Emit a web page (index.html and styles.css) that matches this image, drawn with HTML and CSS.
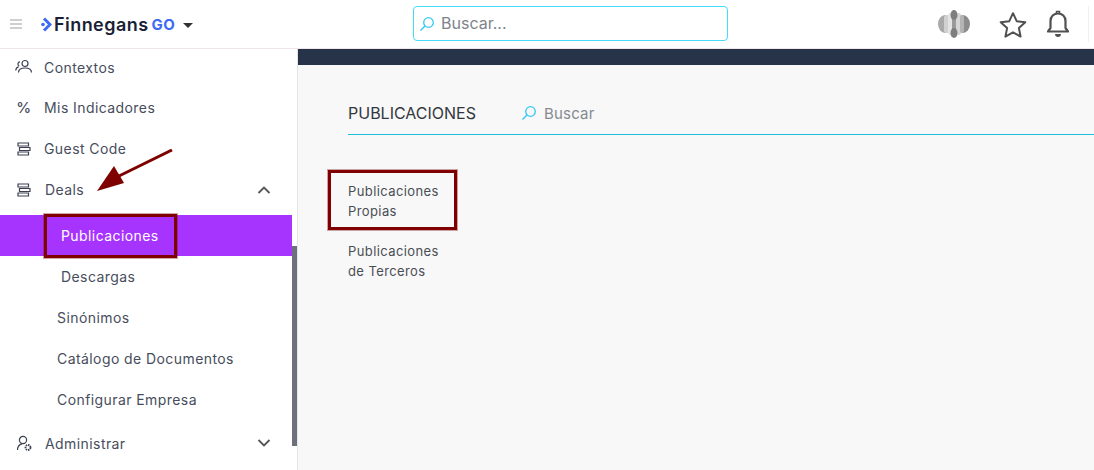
FILE: index.html
```html
<!DOCTYPE html>
<html lang="es">
<head>
  <meta charset="UTF-8" />
  <meta name="viewport" content="width=device-width, initial-scale=1.0"/>
  <title>Publicaciones</title>
  <link rel="stylesheet" href="styles.css">
</head>
<body>

<header class="topbar">
  <div class="marca">
    <svg class="hamburguesa" width="14" height="10" viewBox="0 0 14 10"><path d="M1 1h12M1 5h12M1 9h12" stroke="#a0a0a0" stroke-width="1.200" fill="none"/></svg>
    <svg class="logo-icono" width="11" height="15" viewBox="0 0 11 15"><path d="M3 1.500 9 7.500l-6 6" stroke="#3d6bf5" stroke-width="3" fill="none"/><circle cx="2" cy="7.500" r="1.800" fill="#3d6bf5"/></svg>
    <span class="logo-texto">Finnegans</span><span class="logo-go">GO</span>
    <span class="caret"></span>
  </div>
  <div class="buscador">
    <svg width="16" height="16" viewBox="0 0 16 16"><circle cx="9.500" cy="6.500" r="4.800" stroke="#35c9f2" stroke-width="1.300" fill="none"/><path d="M6 10 1.500 14.500" stroke="#35c9f2" stroke-width="1.500"/></svg>
    <span>Buscar...</span>
  </div>
  <div class="acciones">
    <svg class="nube" width="32" height="30" viewBox="0 0 32 30">
      <ellipse cx="7" cy="15" rx="7" ry="9" fill="#a9a9a9"/>
      <ellipse cx="25" cy="15" rx="7" ry="9" fill="#8c8c8c"/>
      <rect x="6" y="6" width="5" height="18" rx="2.500" fill="#d0d0d0"/>
      <rect x="10" y="4" width="5" height="22" rx="2.500" fill="#e4e4e4"/>
      <rect x="18" y="4" width="5" height="22" rx="2.500" fill="#d6d6d6"/>
      <rect x="22" y="6" width="4" height="18" rx="2" fill="#b4b4b4"/>
      <rect x="14" y="8" width="4" height="14" fill="#9a9a9a"/>
      <ellipse cx="16" cy="6" rx="3.500" ry="5" fill="#7e7e7e"/>
      <ellipse cx="16" cy="24" rx="3.500" ry="5" fill="#7e7e7e"/>
    </svg>
    <svg class="estrella" width="28" height="27" viewBox="0 0 28 27"><path d="M14 2.200l3.700 8 8.600 1-6.400 5.900 1.700 8.500L14 21.300l-7.600 4.300 1.700-8.500-6.400-5.900 8.600-1z" stroke="#505050" stroke-width="2" fill="none" stroke-linejoin="round"/></svg>
    <svg class="campana" width="22" height="28" viewBox="0 0 22 28"><path d="M1 21.500h20l-2.500-3.500v-7c0-4.500-3.300-7.500-7.500-7.500S3.500 6.500 3.500 11v7z" stroke="#505050" stroke-width="2.200" fill="none" stroke-linejoin="round"/><path d="M9.500 3V1.500h3V3" stroke="#505050" stroke-width="1.500" fill="none"/><path d="M8 24h6c0 2-1.200 3-3 3s-3-1-3-3z" fill="#505050"/></svg>
    <div class="separador"></div>
  </div>
</header>

<div class="cuerpo">
  <aside class="lateral">
    <nav class="menu">
      <a class="item" href="#">
        <svg class="icono" width="18" height="16" viewBox="0 0 18 16"><circle cx="10" cy="4.500" r="3" stroke="#3a4152" stroke-width="1.200" fill="none"/><path d="M3.500 13.500c0-3 3-4.500 6.500-4.500s6.500 1.500 6.500 4.500M5 2.800a2.200 2.200 0 0 0-.8 4.200M.8 11.500c0-2 1-3.200 2.800-3.700" stroke="#3a4152" stroke-width="1.200" fill="none"/></svg>
        Contextos
      </a>
      <a class="item" href="#"><span class="icono porcentaje">%</span>Mis Indicadores</a>
      <a class="item" href="#">
        <svg class="icono" width="18" height="14" viewBox="0 0 18 14"><path d="M3 1h10.500v3H3zM4.500 5.500H15v3H4.500zM3 10h10.500v3H3z" stroke="#3a4152" stroke-width="1.200" fill="#fff"/></svg>
        Guest Code
      </a>
      <a class="item item-deals" href="#">
        <svg class="icono" width="18" height="14" viewBox="0 0 18 14"><path d="M3 1h10.500v3H3zM4.500 5.500H15v3H4.500zM3 10h10.500v3H3z" stroke="#3a4152" stroke-width="1.200" fill="#fff"/></svg>
        <span class="etiqueta">Deals</span>
        <svg class="flecha" width="14" height="8" viewBox="0 0 14 8"><path d="M1.500 7 7 1.500 12.500 7" stroke="#555" stroke-width="1.800" fill="none"/></svg>
      </a>
      <a class="subitem activo" href="#">Publicaciones</a>
      <a class="subitem" href="#">Descargas</a>
      <a class="opcion" href="#">Sinónimos</a>
      <a class="opcion" href="#">Catálogo de Documentos</a>
      <a class="opcion" href="#">Configurar Empresa</a>
      <a class="item item-admin" href="#">
        <svg class="icono" width="18" height="17" viewBox="0 0 18 17"><circle cx="8" cy="5" r="3.600" stroke="#3a4152" stroke-width="1.200" fill="none"/><path d="M2.500 15c0-3 1.600-5.500 4.500-6.200" stroke="#3a4152" stroke-width="1.200" fill="none"/><circle cx="13" cy="12.500" r="2.500" stroke="#3a4152" stroke-width="1.800" stroke-dasharray="1.500 .8" fill="none"/></svg>
        <span class="etiqueta">Administrar</span>
        <svg class="flecha" width="14" height="8" viewBox="0 0 14 8"><path d="M1.500 1 7 6.500 12.500 1" stroke="#555" stroke-width="1.800" fill="none"/></svg>
      </a>
    </nav>
    <div class="scroll"><div class="scroll-barra"></div></div>
  </aside>

  <main class="contenido">
    <div class="franja"></div>
    <section class="publicaciones">
      <div class="pub-cabecera">
        <h2>PUBLICACIONES</h2>
        <svg width="16" height="16" viewBox="0 0 16 16"><circle cx="9.500" cy="6.500" r="4.800" stroke="#35c9f2" stroke-width="1.300" fill="none"/><path d="M6 10 1.500 14.500" stroke="#35c9f2" stroke-width="1.500"/></svg>
        <span class="pub-buscar">Buscar</span>
      </div>
      <ul class="pub-lista">
        <li>Publicaciones<br>Propias</li>
        <li>Publicaciones<br>de Terceros</li>
      </ul>
    </section>
  </main>
</div>

<!-- marcas de la captura -->
<div class="marca-roja marca-menu"></div>
<div class="marca-roja marca-propias"></div>
<svg class="marca-flecha" width="80" height="46" viewBox="0 0 80 46"><path d="M75 1 22 27" stroke="#7f0000" stroke-width="3"/><path d="M0 42 17 17l10 17z" fill="#7f0000"/></svg>

</body>
</html>
```

FILE: styles.css
```css
body {
  font-family: Inter, "Open Sans", sans-serif;
  margin: 0;
  height: 470px;
  overflow: hidden;
  background-color: white;
  color: #474d5c;
  position: relative;
}

a {
  color: inherit;
  text-decoration: none;
}

.topbar {
  height: 48px;
  display: flex;
  align-items: center;
  border-bottom: 1px solid #f0e6e8;
}

.marca {
  width: 413px;
  display: flex;
  align-items: center;
}

.hamburguesa {
  margin-left: 9px;
  margin-right: 18px;
}

.logo-icono {
  margin-right: 2px;
}

.logo-texto {
  font-size: 18px;
  font-weight: 600;
  color: #1a1f36;
  letter-spacing: .45px;
}

.logo-go {
  font-size: 15px;
  font-weight: 700;
  color: #3d6bf5;
  margin-left: 3px;
  letter-spacing: .5px;
}

.caret {
  margin-left: 8px;
  margin-top: 3px;
  border-left: 5px solid transparent;
  border-right: 5px solid transparent;
  border-top: 5px solid #333;
}

.buscador {
  box-sizing: border-box;
  width: 315px;
  height: 35px;
  margin-top: -1px;
  border: 1px solid #45dcf7;
  border-radius: 4px;
  display: flex;
  align-items: center;
  gap: 6px;
  padding-left: 5px;
  font-size: 16px;
  color: #7d838a;
}

.buscador span {
  margin-top: -2px;
}

.acciones {
  margin-left: 210px;
  display: flex;
  align-items: center;
}

.estrella {
  margin-left: 29px;
}

.campana {
  margin-left: 20px;
}

.separador {
  width: 1px;
  height: 36px;
  margin-left: 19px;
  background: #f0f0f0;
}

.cuerpo {
  display: flex;
  height: 421px;
}

.lateral {
  width: 297px;
  flex: none;
  display: flex;
  border-right: 1px solid #e4e4e4;
}

.menu {
  flex: 1;
  margin-top: -2px;
  font-size: 14px;
  letter-spacing: .42px;
  display: flex;
  flex-direction: column;
}

.item {
  flex: none;
  height: 41px;
  display: flex;
  align-items: center;
  padding-left: 15px;
}

.item:first-child {
  height: 40px;
}

.icono {
  width: 18px;
  margin-right: 11px;
  flex: none;
}

.porcentaje {
  font-size: 15px;
  font-weight: 500;
  text-align: center;
}

.item-deals {
  padding-bottom: 5px;
}

.item-deals .icono,
.item-admin .icono {
  margin-right: 12px;
}

.item-admin {
  height: 46px;
  padding-bottom: 2px;
}

.etiqueta {
  flex: 1;
}

.flecha {
  margin-right: 21px;
}

.subitem {
  flex: none;
  height: 41px;
  display: flex;
  align-items: center;
  padding-left: 61px;
}

.activo {
  background: #a733ff;
  color: white;
}

.opcion {
  flex: none;
  height: 41px;
  display: flex;
  align-items: center;
  padding-left: 57px;
}

.scroll {
  width: 5px;
  background: white;
}

.scroll-barra {
  margin-top: 197px;
  height: 200px;
  background: #6c717c;
}

.contenido {
  flex: 1;
  background: #f8f8f8;
}

.franja {
  height: 16px;
  background: #273349;
}

.publicaciones {
  padding: 30px 0 0 50px;
}

.pub-cabecera {
  display: flex;
  align-items: center;
  height: 36px;
  padding-bottom: 3px;
  border-bottom: 1px solid #1fc0dc;
}

.pub-cabecera h2 {
  margin: 0 45px 0 0;
  font-size: 16px;
  font-weight: 400;
  color: #33373d;
}

.pub-buscar {
  margin-left: 7px;
  font-size: 15px;
  letter-spacing: .2px;
  color: #858a90;
}

.pub-lista {
  list-style: none;
  margin: 46px 0 0;
  padding: 0;
  font-size: 13px;
  letter-spacing: .4px;
  line-height: 20px;
  color: #4a4e54;
}

.pub-lista li {
  margin-bottom: 20px;
}

.marca-roja {
  position: absolute;
  box-sizing: border-box;
  border: 3px solid #7f0000;
  box-shadow: 0 0 0 1px rgba(127, 0, 0, .35);
}

.marca-menu {
  left: 44px;
  top: 214px;
  width: 133px;
  height: 44px;
}

.marca-propias {
  left: 328px;
  top: 170px;
  width: 129px;
  height: 60px;
}

.marca-flecha {
  position: absolute;
  left: 97px;
  top: 149px;
}
```
